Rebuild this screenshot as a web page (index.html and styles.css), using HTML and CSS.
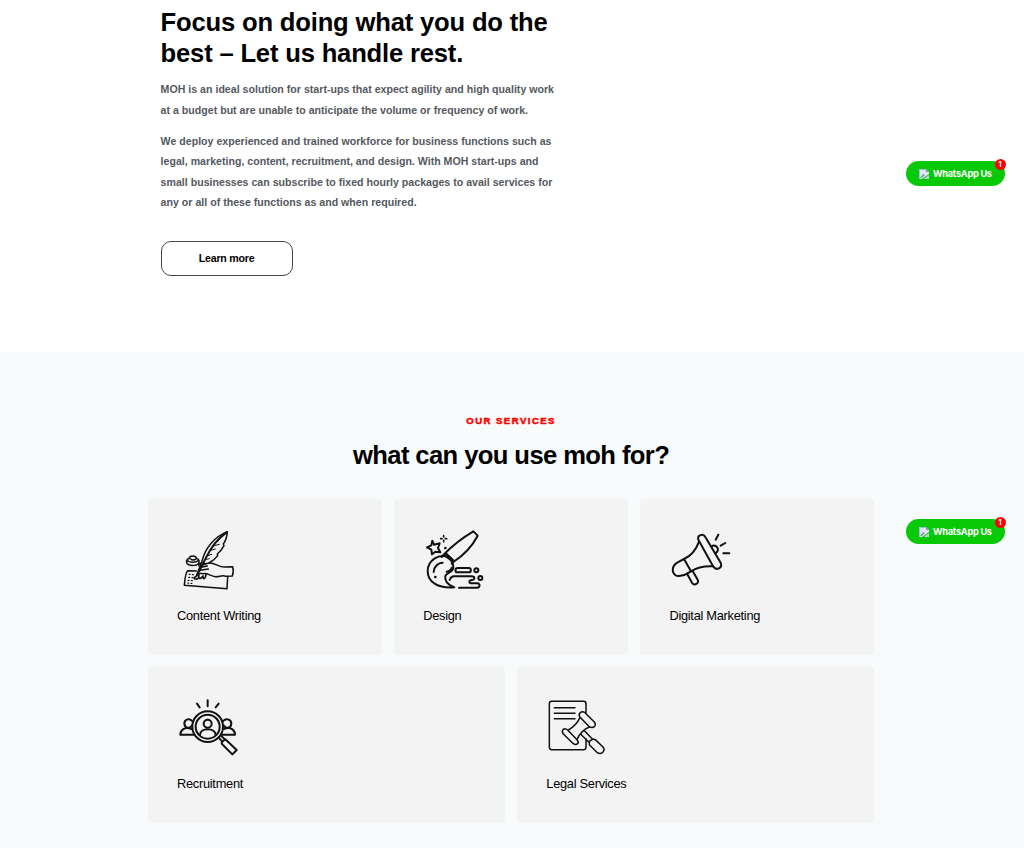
FILE: index.html
```html
<!DOCTYPE html>
<html lang="en">

<head>
  <meta charset="UTF-8" />
  <meta name="viewport" content="width=device-width, initial-scale=1.0" />
  <title>MOH</title>
  <link rel="stylesheet" href="styles.css">
</head>

<body>
  <section class="about">
    <div class="about-text">
      <h2>Focus on doing what you do the<br>best – Let us handle rest.</h2>
      <p>MOH is an ideal solution for start-ups that expect agility and high quality work<br>at a budget but are unable to anticipate the volume or frequency of work.</p>
      <p>We deploy experienced and trained workforce for business functions such as<br>legal, marketing, content, recruitment, and design. With MOH start-ups and<br>small businesses can subscribe to fixed hourly packages to avail services for<br>any or all of these functions as and when required.</p>
      <a class="btn" href="#">Learn more</a>
    </div>
  </section>

  <section class="services">
    <h6>OUR SERVICES</h6>
    <h2>what can you use moh for?</h2>

    <div class="row">
      <div class="card">
        <!-- quill and paper -->
        <svg class="icon" viewBox="0 0 240 240" stroke-width="4.5">
          <path d="M80 167 C84 152 92 138 97 120 C106 85 132 51 172 35 C171 52 166 64 160 72 L162 77 C156 88 150 96 142 102 L143 107 C136 117 127 124 117 129" />
          <path d="M80 167 C92 146 101 128 108 113 C122 84 143 56 170 37" stroke-width="6" />
          <path d="M165 39 L172 36 M113 107 L125 103 M123 91 L136 87 M133 77 L148 73 M109 118 L118 116" stroke-width="3" />
          <path d="M92 137 C103 133 111 128 122 129 C138 131 149 142 164 141 L188 140 C191 149 190 158 187 168 L168 169 C157 164 148 171 137 170 C121 169 113 158 100 161 L89 160" />
          <path d="M86 137 C88 128 98 127 106 131 M93 142 L112 138 M91 151 L115 147" />
          <path d="M77 170 C69 173 72 179 83 176 M87 164 C84 176 90 180 99 168 C98 180 106 178 108 164" stroke-width="5" />
          <path d="M79 153 L53 152 C45 160 45 181 43 196 L171 206 L173 171" />
          <path d="M56 115 C49 119 48 125 51 130 C56 138 78 139 85 131 C90 124 87 118 80 115 M52 121 C57 128 79 129 86 121 M57 116 C59 105 77 105 80 116 M62 117 C66 121 73 121 77 117" />
          <path d="M57 163 L71 164 M56 172 L70 173 M54 181 L71 182 M53 189 L69 191" stroke-width="3.5" stroke-dasharray="3 7" />
        </svg>
        <h5>Content Writing</h5>
      </div>
      <div class="card">
        <!-- paint brush -->
        <svg class="icon" viewBox="0 0 240 240" stroke-width="6">
          <path d="M83 104 C106 80 140 53 172 34 L185 47 C169 78 142 106 112 126 Z M83 104 L77 111 M112 126 L107 131 M91 101 L112 121" />
          <path d="M98 112 C68 99 35 121 35 153 C35 187 67 206 115 202 C94 195 85 181 88 168 C92 158 111 157 112 144 C113 132 107 121 98 112 Z" />
          <path d="M53 156 C54 139 67 128 80 128 M107 143 C106 149 99 154 92 155" />
          <path d="M125 144 H158 A6.500 6.500 0 0 1 158 157 H125 A6.500 6.500 0 0 1 125 144 Z" />
          <circle cx="181" cy="151" r="6" />
          <circle cx="193" cy="174" r="6" />
          <path d="M101 180 Q105 169 114 169 H166 C178 169 178 180 167 180 C157 181 158 190 168 190 H184 C194 191 192 203 183 203 H129" />
          <path d="M49 62 L54 74 L71 70 L66 84 L73 97 L58 95 L48 103 L46 89 L33 82 L46 76 Z" />
          <path d="M83 47 V51 M83 61 V65 M74 56 H78 M88 56 H92" stroke-width="5" />
          <circle class="dot" cx="88" cy="84" r="4" />
          <circle class="dot" cx="58" cy="171" r="4" />
        </svg>
        <h5>Design</h5>
      </div>
      <div class="card">
        <!-- megaphone -->
        <svg class="icon" viewBox="0 0 240 240" stroke-width="6">
          <path d="M109 59 C105 44 124 40 130 51 L176 128 C183 144 163 153 154 140 Z" />
          <path d="M111 65 C103 87 88 108 66 117 L47 127 C28 138 29 158 41 166 C51 171 60 166 69 164 L87 154 C107 141 131 138 153 139 M66 117 L87 154" />
          <path d="M76 163 L90 188 C97 199 113 190 107 179 L92 153" />
          <path d="M149 79 C163 70 176 91 161 99" />
          <path d="M161 59 L169 44 M176 77 L190 69 M184 100 H202" />
        </svg>
        <h5>Digital Marketing</h5>
      </div>
    </div>

    <div class="row row-wide">
      <div class="card">
        <!-- people under a magnifier -->
        <svg class="icon" viewBox="0 0 240 240" stroke-width="6">
          <circle cx="113" cy="110" r="46" />
          <circle cx="113" cy="110" r="36" />
          <circle cx="113" cy="101" r="12" />
          <path d="M90 135 C90 112 136 112 137 135" />
          <path d="M67 94 C60 83 43 87 43 101 C44 115 61 117 66 106 M64 117 C44 109 31 121 31 134 H73" />
          <path d="M159 94 C166 83 184 87 184 101 C183 115 166 117 161 106 M162 117 C183 109 195 121 195 134 H153" />
          <path d="M146 143 L157 155 M153 137 L165 149 M155 157 L166 148 L200 180 L187 193 L156 162 Z" />
          <path d="M113 31 V49 M81 41 L89 52 M146 41 L137 52" />
        </svg>
        <h5>Recruitment</h5>
      </div>
      <div class="card">
        <!-- document and gavel -->
        <svg class="icon" viewBox="0 0 240 240" stroke-width="4.500">
          <path d="M141 68 V41 Q141 34 134 34 H38 Q31 34 31 41 V172 Q31 179 38 179 H134 Q141 179 141 172 V147" />
          <path d="M46 53 H108 M46 70 H108 M46 86 H108" />
          <path d="M122 80 C117 70 127 61 138 68 L166 96 C174 107 163 117 151 110 Z" />
          <path d="M86 120 C76 111 65 120 73 132 L103 161 C113 167 123 159 114 149 Z" />
          <path d="M123 83 Q111 108 88 120 M114 148 Q128 120 151 111" />
          <path d="M127 134 L151 158 M137 123 L160 147 M151 154 L162 147 L169 149 L192 171 C201 183 187 196 175 188 L151 164 Z" />
        </svg>
        <h5>Legal Services</h5>
      </div>
    </div>
  </section>

  <a class="whatsapp whatsapp-top" href="#">
    <svg class="broken" viewBox="0 0 10 10"><path fill="#dfe8fa" d="M0 0H7L10 3V5L3 10H0Z" /><path fill="#a9b9dd" d="M0 0H7V1H1V10H0Z" /><path fill="#7f9f9a" d="M1 9L4 5L6 6L3 9Z" /><path fill="#c3cde4" d="M6 9L10 6V10H5Z" /><path fill="#8b93a5" d="M7 0L10 3H7Z" /></svg>
    <span>WhatsApp Us</span>
    <i class="badge">1</i>
  </a>
  <a class="whatsapp whatsapp-bottom" href="#">
    <svg class="broken" viewBox="0 0 10 10"><path fill="#dfe8fa" d="M0 0H7L10 3V5L3 10H0Z" /><path fill="#a9b9dd" d="M0 0H7V1H1V10H0Z" /><path fill="#7f9f9a" d="M1 9L4 5L6 6L3 9Z" /><path fill="#c3cde4" d="M6 9L10 6V10H5Z" /><path fill="#8b93a5" d="M7 0L10 3H7Z" /></svg>
    <span>WhatsApp Us</span>
    <i class="badge">1</i>
  </a>
</body>

</html>
```

FILE: styles.css
```css
* {
  margin: 0;
  padding: 0;
  box-sizing: border-box;
}

body {
  position: relative;
  height: 848px;
  overflow: hidden;
  background: #fff;
  font-family: "Liberation Sans", Arial, sans-serif;
  color: #000;
}

a {
  text-decoration: none;
}

h2 {
  font-size: 25.6px;
  line-height: 30.7px;
}

.about {
  height: 352px;
  padding: 7px 0 0 160.6px;
}

.about-text {
  width: 410px;
  white-space: nowrap;
}

.about h2 {
  margin-bottom: 11px;
  letter-spacing: -0.18px;
}

.about p {
  margin-bottom: 10.5px;
  font-size: 10.6px;
  font-weight: bold;
  line-height: 20.48px;
  letter-spacing: 0.01px;
  color: #54595f;
}

.btn {
  display: flex;
  align-items: center;
  justify-content: center;
  width: 132px;
  height: 35px;
  margin-top: 28px;
  border: 1px solid #444;
  border-radius: 10px;
  font-size: 10.6px;
  font-weight: bold;
  letter-spacing: -0.22px;
  color: #000;
}

.services {
  height: 496px;
  padding: 63px 149.8px 0 148px;
  background: #f7fbfc;
}

.services h6 {
  font-size: 9.6px;
  line-height: 12px;
  letter-spacing: 1.45px;
  text-align: center;
  color: #f00;
  -webkit-text-stroke: 0.5px #f00;
}

.services h2 {
  margin: 13px 0 28px;
  letter-spacing: -0.6px;
  text-align: center;
}

.row {
  display: flex;
  gap: 12.4px;
  margin-bottom: 12px;
}

.card {
  flex: 1;
  height: 156px;
  padding: 21px 29px;
  border-radius: 4px;
  background: #f3f3f3;
}

.card h5 {
  margin-top: 8px;
  font-size: 12.8px;
  font-weight: normal;
  line-height: 16px;
  letter-spacing: -0.27px;
}

.row-wide .card {
  padding-top: 23px;
}

.row-wide .card h5 {
  margin-top: 6px;
}

.icon {
  display: block;
  width: 80px;
  height: 80px;
  margin-left: -7px;
  fill: none;
  stroke: #111;
  stroke-linecap: round;
  stroke-linejoin: round;
}

.icon .dot {
  fill: #111;
  stroke: none;
}

/* floating chat buttons */
.whatsapp {
  position: absolute;
  left: 906px;
  display: flex;
  align-items: center;
  width: 98.5px;
  height: 25px;
  padding-left: 13px;
  border-radius: 13px;
  background: #08c908;
  font-family: Inter, sans-serif;
  font-size: 9.2px;
  font-weight: 700;
  letter-spacing: -0.25px;
  white-space: nowrap;
  color: #fff;
}

.whatsapp-top {
  top: 161px;
}

.whatsapp-bottom {
  top: 519px;
}

.broken {
  width: 10px;
  height: 10px;
  margin-right: 4px;
}

.badge {
  position: absolute;
  top: -2px;
  right: -1px;
  width: 11px;
  height: 11px;
  border-radius: 50%;
  background: #f00;
  font-size: 7px;
  font-style: normal;
  line-height: 11px;
  text-align: center;
}
```
